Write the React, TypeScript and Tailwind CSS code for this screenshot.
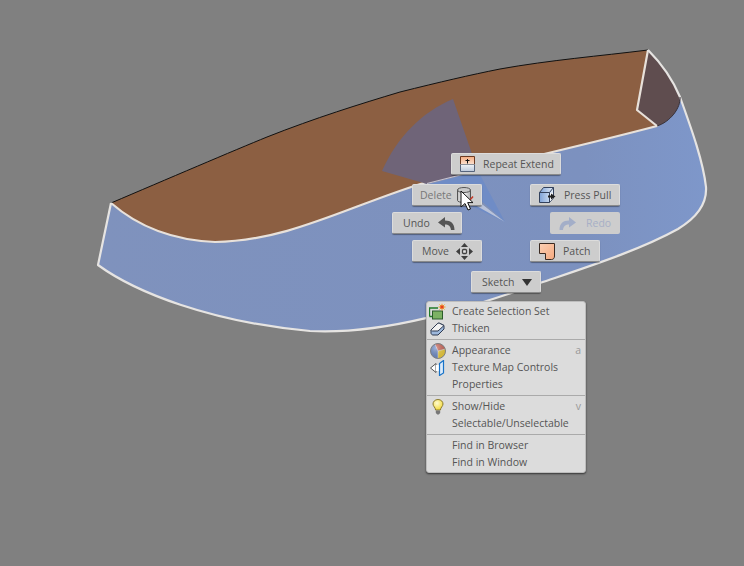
const uiFont = { fontFamily: '"Open Sans", "Noto Sans", sans-serif' }

const TOP_EDGE = "C165 180 235 150 267 137 C315 118 360 104 400 92 C440 82 470 75 500 69 C550 60 600 56 648 50"
const OUTLINE =
  "M111 203 L98 265 C135 292 210 322 310 331 C385 335 470 308 540 283 C590 266 640 250 678 229 C698 217 707 203 706 187 C703 160 690 125 680 97 C672 78 660 62 648 50"

function Surface() {
  return (
    <svg className="absolute inset-0" width="744" height="566" viewBox="0 0 744 566">
      <defs>
        <linearGradient id="blueFace" x1="0" y1="0" x2="1" y2="0">
          <stop offset="0" stopColor="#7f92bd" />
          <stop offset="0.8" stopColor="#7c91bf" />
          <stop offset="1" stopColor="#7e97ca" />
        </linearGradient>
      </defs>
      {/* blue wall */}
      <path d={`${OUTLINE} Z`} fill="url(#blueFace)" />
      {/* brown top */}
      <path
        d={`M111 203 ${TOP_EDGE} L637 110 L657 126 C600 141 520 160 430 181 C350 205 290 241 215 242 C170 240 135 224 111 203 Z`}
        fill="#8c5f42"
      />
      {/* dark corner face */}
      <path d="M648 50 L637 110 L657 126 C670 122 681 108 680 97 C672 78 660 62 648 50 Z" fill="#5f4d4f" />
      <path d={`M111 203 ${TOP_EDGE}`} fill="none" stroke="#111" strokeWidth="1" />
      <path
        d="M111 203 C135 224 170 240 215 242 C290 241 350 205 430 181 C520 160 600 141 657 126 L637 110 L648 50"
        fill="none"
        stroke="#e8e1da"
        strokeWidth="2.2"
        strokeLinejoin="round"
      />
      <path d={OUTLINE} fill="none" stroke="#e6e4e2" strokeWidth="2.2" strokeLinejoin="round" />
      <path d="M657 126 C670 122 681 108 680 97" fill="none" stroke="#38323a" strokeWidth="1" />
      {/* marking menu sector */}
      <path d="M453 99 C422 112 397 137 382 171 L427 184 L478 171 Z" fill="#6f6478" />
      <path d="M427 185 L478 171 L505 222 Z" fill="#6f8cc6" />
      <path d="M427 183.5 L476 171" stroke="#c9c6d2" strokeWidth="1.2" />
      <path d="M477 200 L505 222 L475 205 Z" fill="#b9c2d8" />
      <path d="M477 200 L505 222 L480 200 Z" fill="#8492b4" />
    </svg>
  )
}

function ExtendIcon() {
  return (
    <svg width="15" height="16" viewBox="0 0 15 16">
      <defs>
        <linearGradient id="extTop" x1="0" y1="0" x2="0" y2="1">
          <stop offset="0" stopColor="#f3ab80" />
          <stop offset="1" stopColor="#fbe2d2" />
        </linearGradient>
        <linearGradient id="extBottom" x1="0" y1="0" x2="0" y2="1">
          <stop offset="0" stopColor="#f1f4f8" />
          <stop offset="1" stopColor="#bcc8da" />
        </linearGradient>
      </defs>
      <rect x="0.5" y="0.5" width="14" height="8" fill="url(#extTop)" />
      <rect x="0.5" y="8.5" width="14" height="7" fill="url(#extBottom)" />
      <path d="M0.5 8.5V0.5H14.5V8.5" fill="none" stroke="#6b3a22" />
      <path d="M0.5 8.5V15.5H14.5V8.5" fill="none" stroke="#56647c" />
      <path d="M0.5 8.5H14.5" stroke="#8a8f98" />
      <path d="M7.5 3V7.5M5.5 4.5H9.5" stroke="#111" />
    </svg>
  )
}

function DeleteIcon() {
  return (
    <svg width="17" height="17" viewBox="0 0 17 17">
      <defs>
        <linearGradient id="cyl" x1="0" y1="0" x2="1" y2="0">
          <stop offset="0" stopColor="#bdbdbd" />
          <stop offset="0.45" stopColor="#ffffff" />
          <stop offset="1" stopColor="#aeaeae" />
        </linearGradient>
      </defs>
      <path d="M0.5 3V13.5C0.5 16 13.5 16 13.5 13.5V3Z" fill="url(#cyl)" stroke="#555" />
      <ellipse cx="7" cy="3" rx="6.5" ry="2.5" fill="#c9c9c9" stroke="#555" />
      <path d="M12 14L16 9.5" stroke="#c43a28" strokeWidth="1.5" />
    </svg>
  )
}

function PressPullIcon() {
  return (
    <svg width="17" height="16" viewBox="0 0 17 16">
      <defs>
        <linearGradient id="boxFace" x1="0" y1="0" x2="1" y2="0">
          <stop offset="0" stopColor="#7fa3d8" />
          <stop offset="1" stopColor="#e4edf8" />
        </linearGradient>
      </defs>
      <path d="M0.5 5.5L4.5 0.5H14.5V11L10.5 15.5H0.5Z" fill="url(#boxFace)" stroke="#33415c" />
      <path d="M0.5 5.5H10.5V15.5M10.5 5.5L14.5 0.5" fill="none" stroke="#33415c" />
      <path d="M11 6H14V11L11 14.5Z" fill="#f5f7fb" />
      <path d="M9 8.5H12V6.5L16.5 9.5L12 12.5V10.5H9Z" fill="#222" />
    </svg>
  )
}

function UndoIcon({ flip = false, color = "#555" }: { flip?: boolean; color?: string }) {
  return (
    <svg width="17" height="13" viewBox="0 0 17 13" className={flip ? "-scale-x-100" : ""}>
      <path d="M7 0L0 5.5L7 10.5V7.5C10.5 7.5 12.5 9 13 13H16.5C16.5 6.5 13 3.5 7 3.5Z" fill={color} />
    </svg>
  )
}

function MoveIcon() {
  return (
    <svg width="17" height="17" viewBox="0 0 17 17">
      <path d="M8.5 0L12 4H5ZM8.5 17L5 13H12ZM0 8.5L4 5V12ZM17 8.5L13 12V5Z" fill="#3f3f3f" />
      <rect x="6.5" y="6.5" width="4" height="4" rx="1" fill="#e4e4e4" stroke="#444" strokeWidth="1.3" />
    </svg>
  )
}

function PatchIcon() {
  return (
    <svg width="16" height="17" viewBox="0 0 16 17">
      <defs>
        <linearGradient id="patch" x1="0" y1="0" x2="1" y2="1">
          <stop offset="0" stopColor="#fbd0b4" />
          <stop offset="1" stopColor="#f6a97f" />
        </linearGradient>
      </defs>
      <path d="M0.5 0.5H15.5V13C15.5 15 14.5 16.5 12.5 16.5H6.5V10.5H0.5Z" fill="url(#patch)" stroke="#3a2a22" />
    </svg>
  )
}

function ButtonLabel({ children }: { children: React.ReactNode }) {
  return <span className="relative top-px">{children}</span>
}

function MarkingButton({
  className,
  children,
}: {
  className: string
  children: React.ReactNode
}) {
  return (
    <div
      style={uiFont}
      className={`absolute flex h-[22px] items-center rounded-[2px] border border-[#dcdcdc] border-b-[#8a8a8a] bg-[#cdcdcd] text-[10.5px] text-[#555] shadow-[0_1px_1px_rgba(0,0,0,0.35)] ${className}`}
    >
      {children}
    </div>
  )
}

function SelectionSetIcon() {
  return (
    <svg width="17" height="17" viewBox="0 0 17 17">
      <path d="M9 4.5H0.5V13" fill="none" stroke="#1f7a2a" strokeWidth="1.4" />
      <path d="M0.5 13H3" stroke="#1f7a2a" strokeWidth="1.4" />
      <rect x="3.5" y="7.5" width="10" height="8" fill="#7cb264" stroke="#2c5c2c" />
      <path d="M13 0V7M9.5 3.5H16.5M10.5 1L15.5 6M15.5 1L10.5 6" stroke="#f2a020" strokeWidth="1" />
      <circle cx="13" cy="3.5" r="1.8" fill="#e8431a" />
    </svg>
  )
}

function ThickenIcon() {
  return (
    <svg width="15" height="14" viewBox="0 0 15 14">
      <path d="M1 8L7 2C8 1 9 1 10 1.5L14 3.5V7L8 13H3C2 13 1 12 1 11Z" fill="#9db8dc" stroke="#2f3b52" />
      <path d="M1 8L7 2C8 1 9 1 10 1.5L14 3.5L8 9H2.5C1.6 9 1 8.6 1 8Z" fill="#f2f2f2" stroke="#2f3b52" />
    </svg>
  )
}

function AppearanceIcon() {
  return (
    <svg width="16" height="16" viewBox="0 0 16 16">
      <defs>
        <radialGradient id="sheen" cx="0.35" cy="0.3" r="0.8">
          <stop offset="0" stopColor="#fff" stopOpacity="0.35" />
          <stop offset="1" stopColor="#000" stopOpacity="0.1" />
        </radialGradient>
      </defs>
      <circle cx="8" cy="8" r="7.5" fill="#6e8cc8" />
      <path d="M8 8L5 1.2A7.5 7.5 0 0 1 15.2 6Z" fill="#cf6a5c" />
      <path d="M8 8L15.2 6A7.5 7.5 0 0 1 8 15.5Z" fill="#efcf3c" />
      <path d="M5 1.2L8 8L8 15.5M8 8L15.2 6" fill="none" stroke="#fff" strokeWidth="0.7" opacity="0.7" />
      <circle cx="8" cy="8" r="7.5" fill="url(#sheen)" stroke="#808080" />
    </svg>
  )
}

function TextureIcon() {
  return (
    <svg width="15" height="16" viewBox="0 0 15 16">
      <path d="M0.5 8L6 3.5V12.5Z" fill="#fff" stroke="#555" />
      <path d="M6 5H9V11H6Z" fill="#fff" />
      <path d="M9.5 3.5L13.5 0.5V13L9.5 15.5Z" fill="#dcebfa" stroke="#1873c8" strokeWidth="1.2" />
    </svg>
  )
}

function BulbIcon() {
  return (
    <svg width="12" height="16" viewBox="0 0 12 16">
      <defs>
        <radialGradient id="bulb" cx="0.4" cy="0.35" r="0.7">
          <stop offset="0" stopColor="#fffbd0" />
          <stop offset="1" stopColor="#f3d830" />
        </radialGradient>
      </defs>
      <path d="M6 0.5C2.8 0.5 1 2.8 1 5C1 7.2 3.4 8.4 3.6 11H8.4C8.6 8.4 11 7.2 11 5C11 2.8 9.2 0.5 6 0.5Z" fill="url(#bulb)" stroke="#8a7a30" />
      <path d="M3.8 11.5H8.2V14L6.8 15.5H5.2L3.8 14Z" fill="#777" />
    </svg>
  )
}

function MenuRow({
  icon,
  label,
  shortcut,
}: {
  icon?: React.ReactNode
  label: string
  shortcut?: string
}) {
  return (
    <div className="relative flex h-[17px] items-center pl-[25px] pr-[4px]">
      {icon && <span className="absolute left-[2px] top-1/2 flex w-[17px] -translate-y-1/2 justify-center">{icon}</span>}
      <span className="flex-1 whitespace-nowrap">{label}</span>
      {shortcut && <span className="text-[#999]">{shortcut}</span>}
    </div>
  )
}

function Separator() {
  return (
    <div className="flex h-[5px] items-center">
      <div className="h-px w-full bg-[#aaaaaa]" />
    </div>
  )
}

function ContextMenu() {
  return (
    <div
      style={uiFont}
      className="absolute left-[426px] top-[301px] flex w-[160px] flex-col rounded-[3px] border border-[#bdbdbd] bg-[#dcdcdc] py-[1px] text-[10.5px] text-[#555] shadow-[0_1px_2px_rgba(0,0,0,0.6)]"
    >
      <MenuRow icon={<SelectionSetIcon />} label="Create Selection Set" />
      <MenuRow icon={<ThickenIcon />} label="Thicken" />
      <Separator />
      <MenuRow icon={<AppearanceIcon />} label="Appearance" shortcut="a" />
      <MenuRow icon={<TextureIcon />} label="Texture Map Controls" />
      <MenuRow label="Properties" />
      <Separator />
      <MenuRow icon={<BulbIcon />} label="Show/Hide" shortcut="v" />
      <MenuRow label="Selectable/Unselectable" />
      <Separator />
      <MenuRow label="Find in Browser" />
      <MenuRow label="Find in Window" />
    </div>
  )
}

export default function App() {
  return (
    <div className="relative h-[566px] w-[744px] overflow-hidden bg-[#808080]">
      <Surface />

      <MarkingButton className="left-[451px] top-[153px] w-[110px] gap-[8px] pl-[8px]">
        <ExtendIcon />
        <ButtonLabel>Repeat Extend</ButtonLabel>
      </MarkingButton>

      <MarkingButton className="left-[412px] top-[184px] w-[70px] gap-[5px] pl-[7px] text-[#777]">
        <ButtonLabel>Delete</ButtonLabel>
        <DeleteIcon />
      </MarkingButton>

      <MarkingButton className="left-[530px] top-[184px] w-[90px] gap-[8px] pl-[8px]">
        <PressPullIcon />
        <ButtonLabel>Press Pull</ButtonLabel>
      </MarkingButton>

      <MarkingButton className="left-[392px] top-[212px] w-[70px] gap-[8px] pl-[10px]">
        <ButtonLabel>Undo</ButtonLabel>
        <UndoIcon />
      </MarkingButton>

      <MarkingButton className="left-[550px] top-[212px] w-[70px] gap-[10px] border-transparent border-b-transparent bg-[#8b9cc4] pl-[8px] text-[#a7afc6] shadow-none">
        <UndoIcon flip color="#a3aec8" />
        <ButtonLabel>Redo</ButtonLabel>
      </MarkingButton>

      <MarkingButton className="left-[412px] top-[240px] w-[70px] gap-[7px] pl-[9px]">
        <ButtonLabel>Move</ButtonLabel>
        <MoveIcon />
      </MarkingButton>

      <MarkingButton className="left-[530px] top-[240px] w-[70px] gap-[8px] pl-[8px]">
        <PatchIcon />
        <ButtonLabel>Patch</ButtonLabel>
      </MarkingButton>

      <MarkingButton className="left-[471px] top-[271px] w-[70px] gap-[8px] pl-[10px]">
        <ButtonLabel>Sketch</ButtonLabel>
        <svg width="10" height="7" viewBox="0 0 10 7">
          <path d="M0 0H10L5 7Z" fill="#333" />
        </svg>
      </MarkingButton>

      <ContextMenu />

      {/* mouse cursor */}
      <svg className="absolute left-[460px] top-[190px]" width="14" height="22" viewBox="0 0 14 22">
        <path d="M1 1V17L5 13.5L8 20L10.5 19L7.7 12.6H13Z" fill="#fff" stroke="#111" />
      </svg>
    </div>
  )
}
